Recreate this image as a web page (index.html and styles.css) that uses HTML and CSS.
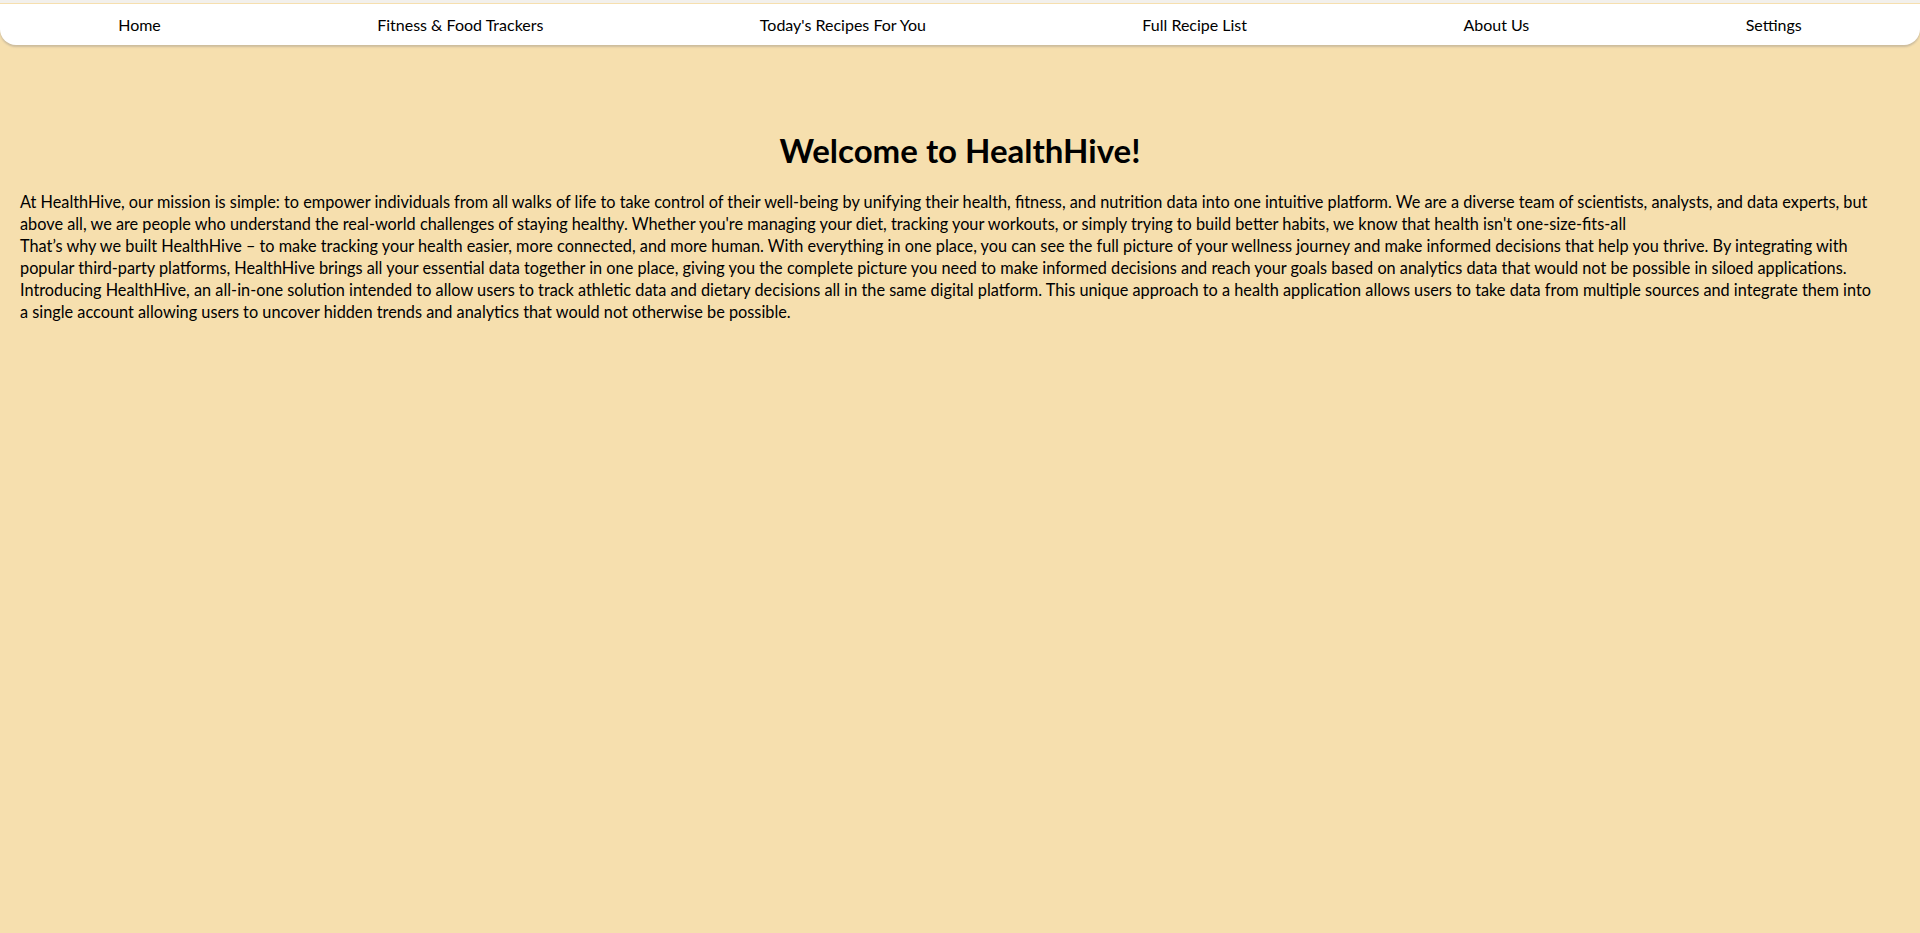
FILE: index.html
```html
<!DOCTYPE html>
<html lang="en">
<head>
<meta charset="utf-8">
<title>HealthHive</title>
<link rel="stylesheet" href="styles.css">
</head>
<body>
<nav class="topnav">
  <ul class="nav-list">
    <li><a class="nav-link" href="#">Home</a></li>
    <li><a class="nav-link" href="#">Fitness &amp; Food Trackers</a></li>
    <li><a class="nav-link" href="#">Today's Recipes For You</a></li>
    <li><a class="nav-link" href="#">Full Recipe List</a></li>
    <li><a class="nav-link" href="#">About Us</a></li>
    <li><a class="nav-link" href="#">Settings</a></li>
  </ul>
</nav>
<main class="content">
  <h1 class="title">Welcome to HealthHive!</h1>
  <div class="about">
    <p class="about-text">At HealthHive, our mission is simple: to empower individuals from all walks of life to take control of their well-being by unifying their health, fitness, and nutrition data into one intuitive platform. We are a diverse team of scientists, analysts, and data experts, but<br>above all, we are people who understand the real-world challenges of staying healthy. Whether you're managing your diet, tracking your workouts, or simply trying to build better habits, we know that health isn't one-size-fits-all</p>
    <p class="about-text">That’s why we built HealthHive – to make tracking your health easier, more connected, and more human. With everything in one place, you can see the full picture of your wellness journey and make informed decisions that help you thrive. By integrating with<br>popular third-party platforms, HealthHive brings all your essential data together in one place, giving you the complete picture you need to make informed decisions and reach your goals based on analytics data that would not be possible in siloed applications.</p>
    <p class="about-text">Introducing HealthHive, an all-in-one solution intended to allow users to track athletic data and dietary decisions all in the same digital platform. This unique approach to a health application allows users to take data from multiple sources and integrate them into<br>a single account allowing users to uncover hidden trends and analytics that would not otherwise be possible.</p>
  </div>
</main>
</body>
</html>
```

FILE: styles.css
```css
html, body {
  margin: 0;
  padding: 0;
}
body {
  background: #f6dfae;
  font-family: Lato, "Noto Sans", sans-serif;
  color: #000;
  min-height: 933px;
  border-top: 3px solid #f2f0ec;
}
.topnav {
  background: #ffffff;
  border-radius: 0 0 16px 16px;
  box-shadow: 0 2px 2px rgba(60, 70, 100, 0.22);
  margin-top: 1px;
}
.nav-list {
  list-style: none;
  margin: 0;
  padding: 0 10px;
  height: 41px;
  display: flex;
  align-items: center;
  justify-content: space-around;
}
.nav-link {
  color: #000;
  text-decoration: none;
  font-size: 16px;
}
.content {
  padding: 0 20px;
}
.title {
  text-align: center;
  font-size: 33px;
  font-weight: 700;
  margin: 85px 0 21px;
  line-height: 40px;
}
.about-text {
  margin: 0;
  font-size: 16.3px;
  line-height: 22px;
}
```
